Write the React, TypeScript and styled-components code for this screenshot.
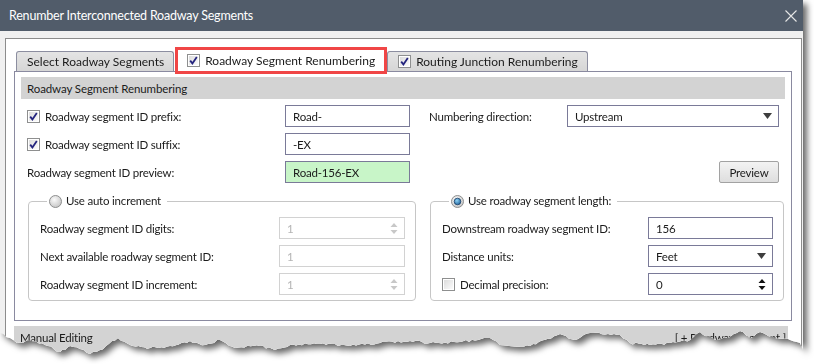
import styled, { createGlobalStyle } from "styled-components";

const GlobalStyle = createGlobalStyle`
  html, body {
    margin: 0;
    padding: 0;
    background: #fff;
  }
  body {
    font-family: Lato, "Noto Sans", sans-serif;
    font-size: 11.5px;
    letter-spacing: -0.2px;
    color: #1b1b1b;
  }
`;

// torn paper edge along the bottom of the screenshot
const edge: [number, number][] = [
  [0, 333], [10, 338], [17, 343], [30, 340], [45, 345], [60, 352], [65, 350],
  [70, 346], [80, 349], [90, 354], [100, 350], [118, 338], [130, 345],
  [150, 348], [170, 346], [190, 341], [205, 345], [220, 340], [235, 348],
  [260, 346], [275, 350], [290, 345], [320, 344], [350, 346], [380, 343],
  [410, 341], [430, 343], [460, 342], [490, 338], [500, 345], [530, 346],
  [560, 334], [575, 340], [590, 333], [620, 335], [630, 343], [650, 345],
  [670, 343], [690, 340], [700, 332], [715, 340], [730, 337], [740, 331],
  [750, 338], [760, 332], [775, 338], [790, 340], [800, 343], [803, 350],
];

const jagged = (() => {
  const pts: string[] = [];
  let seed = 7;
  const rnd = () => {
    seed = (seed * 9301 + 49297) % 233280;
    return seed / 233280 - 0.5;
  };
  for (let i = edge.length - 1; i > 0; i--) {
    const [x1, y1] = edge[i];
    const [x0, y0] = edge[i - 1];
    const steps = Math.max(1, Math.round((x1 - x0) / 3));
    for (let s = 0; s < steps; s++) {
      const t = s / steps;
      const x = x1 + (x0 - x1) * t;
      const y = y1 + (y0 - y1) * t + (s === 0 ? 0 : rnd() * 2.5);
      pts.push(`${x.toFixed(1)}px ${y.toFixed(1)}px`);
    }
  }
  pts.push(`0px ${edge[0][1]}px`);
  return `polygon(0 0, 803px 0, ${pts.join(", ")})`;
})();

const Stage = styled.div`
  width: 814px;
  height: 364px;
  overflow: hidden;
  background: #fff;
`;

const ShadowWrap = styled.div`
  width: 803px;
  filter: drop-shadow(4px 4px 3px rgba(0, 0, 0, 0.6));
`;

const Window = styled.div`
  height: 364px;
  background: #f0f0f0;
  display: flex;
  flex-direction: column;
`;

const TitleBar = styled.div`
  height: 31px;
  flex: none;
  background: #515c6a;
  color: #fff;
  display: flex;
  align-items: center;
  justify-content: space-between;
  padding: 0 6px 0 9px;
  font-size: 12.5px;
`;

const Body = styled.div`
  padding: 7px 1px 0 5px;
`;

const Panel = styled.div`
  background: #fff;
  border: 1px solid #8c8c8c;
  padding: 8px 9px 0 8px;
  height: 340px;
`;

const TabStrip = styled.div`
  display: flex;
  align-items: flex-end;
  padding-left: 2px;
  position: relative;
  z-index: 1;
`;

const Tab = styled.div<{ $active?: boolean }>`
  display: flex;
  align-items: center;
  gap: 5px;
  font-size: 12px;
  letter-spacing: 0;
  color: #1b1b1b;
  box-sizing: border-box;
  ${(p) =>
    p.$active
      ? `
    height: 27px;
    margin: 0 0 -3px 1px;
    padding: 0 9px 0 9px;
    background: #fff;
    border: 3px solid #f04646;
  `
      : `
    height: 20px;
    padding: 0 9px 0 10px;
    background: linear-gradient(#e4e4e4, #d6d6d6);
    border: 1px solid #8c8ea0;
    border-bottom: none;
    border-radius: 3px 3px 0 0;
  `}
`;

const TabBody = styled.div`
  border: 1px solid #8a8aa0;
  background: #fff;
  padding: 5px 6px 19px 6px;
`;

const SectionHeader = styled.div`
  height: 22px;
  background: #d3d3d3;
  display: flex;
  align-items: center;
  padding-left: 6px;
  letter-spacing: -0.1px;
`;

const FormGrid = styled.div`
  display: grid;
  grid-template-columns: 258px 125px 19px 138px 212px;
  grid-auto-rows: 22px;
  row-gap: 6px;
  margin-top: 6px;
  padding-left: 6px;
  align-items: center;
`;

const Label = styled.div<{ $col?: number }>`
  display: flex;
  align-items: center;
  gap: 5px;
  white-space: nowrap;
  grid-column: ${(p) => p.$col ?? "auto"};
  color: #1b1b1b;
`;

const Field = styled.div<{ $col?: number; $green?: boolean; $disabled?: boolean }>`
  grid-column: ${(p) => p.$col ?? "auto"};
  height: 22px;
  box-sizing: border-box;
  display: flex;
  align-items: center;
  justify-content: space-between;
  padding: 0 6px 0 7px;
  border: 1px solid ${(p) => (p.$disabled ? "#d2d2d2" : "#7a7a98")};
  background: ${(p) => (p.$green ? "#c8f5c8" : "#fff")};
  color: ${(p) => (p.$disabled ? "#b4b4b4" : "#1b1b1b")};
`;

const PreviewButton = styled.div`
  grid-column: 5;
  justify-self: end;
  width: 60px;
  height: 22px;
  box-sizing: border-box;
  border: 1px solid #a2a2a2;
  border-radius: 2px;
  background: linear-gradient(#f3f3f3, #dedede);
  display: flex;
  align-items: center;
  justify-content: center;
`;

const GroupRow = styled.div`
  display: flex;
  gap: 14px;
  margin: 11px 0 0 7px;
`;

const Group = styled.fieldset<{ $width: number }>`
  width: ${(p) => p.$width}px;
  box-sizing: border-box;
  margin: 0;
  min-width: 0;
  border: 1px solid #c6c6c6;
  border-radius: 4px;
  padding: 9px 10px 5px 11px;
`;

const Legend = styled.legend`
  display: flex;
  align-items: center;
  gap: 4px;
  padding: 0 6px 0 2px;
  margin-left: 7px;
  line-height: 14px;
`;

const GroupGrid = styled.div<{ $field: number }>`
  display: grid;
  grid-template-columns: 1fr ${(p) => p.$field}px;
  grid-auto-rows: 22px;
  row-gap: 6px;
  align-items: center;
`;

const ManualBand = styled.div`
  margin: 5px 4px 0 0;
  height: 40px;
  background: #d3d3d3;
  display: flex;
  justify-content: space-between;
  align-items: flex-start;
  padding: 4px 2px 0 6px;
  line-height: 16px;
`;

const CloseIcon = () => (
  <svg width="12" height="12" viewBox="0 0 12 12">
    <path d="M0.5 0.5 L11.5 11.5 M11.5 0.5 L0.5 11.5" stroke="#e6e6e6" strokeWidth="1.1" />
  </svg>
);

const CheckBox = ({ checked }: { checked?: boolean }) => (
  <svg width="13" height="13" viewBox="0 0 13 13" style={{ flex: "none" }}>
    <defs>
      <linearGradient id="cbg" x1="0" y1="0" x2="1" y2="1">
        <stop offset="0" stopColor="#dcdcdc" />
        <stop offset="1" stopColor="#fbfbfb" />
      </linearGradient>
    </defs>
    <rect x="0.5" y="0.5" width="12" height="12" fill="#fff" stroke="#8e8f8f" />
    <rect x="2" y="2" width="9" height="9" fill="url(#cbg)" />
    {checked && (
      <path d="M3.2 6.6 L5.4 9.4 L9.8 2.9" fill="none" stroke="#24247e" strokeWidth="1.8" />
    )}
  </svg>
);

const Radio = ({ checked }: { checked?: boolean }) => (
  <svg width="13" height="13" viewBox="0 0 13 13" style={{ flex: "none" }}>
    <defs>
      <radialGradient id="rbg" cx="0.4" cy="0.35" r="0.7">
        <stop offset="0" stopColor="#fafafa" />
        <stop offset="1" stopColor="#c4c4c4" />
      </radialGradient>
      <radialGradient id="rdot" cx="0.4" cy="0.35" r="0.7">
        <stop offset="0" stopColor="#8fd3f5" />
        <stop offset="1" stopColor="#1c5f9a" />
      </radialGradient>
    </defs>
    <circle cx="6.5" cy="6.5" r="6" fill="url(#rbg)" stroke="#8e8f8f" />
    {checked && <circle cx="6.5" cy="6.5" r="3.3" fill="url(#rdot)" stroke="#1b3f66" strokeWidth="0.8" />}
  </svg>
);

const DropArrow = () => (
  <svg width="9" height="6" viewBox="0 0 9 6">
    <path d="M0 0 L9 0 L4.5 6 Z" fill="#3e3e3e" />
  </svg>
);

const SpinArrows = ({ color }: { color: string }) => (
  <svg width="8" height="13" viewBox="0 0 8 13">
    <path d="M0.5 5 L4 1 L7.5 5 Z" fill={color} />
    <path d="M0.5 8 L4 12 L7.5 8 Z" fill={color} />
  </svg>
);

export default function App() {
  return (
    <Stage>
      <GlobalStyle />
      <ShadowWrap>
        <Window style={{ clipPath: jagged }}>
          <TitleBar>
            <span>Renumber Interconnected Roadway Segments</span>
            <CloseIcon />
          </TitleBar>
          <Body>
            <Panel>
              <TabStrip>
                <Tab>Select Roadway Segments</Tab>
                <Tab $active>
                  <CheckBox checked />
                  Roadway Segment Renumbering
                </Tab>
                <Tab>
                  <CheckBox checked />
                  Routing Junction Renumbering
                </Tab>
              </TabStrip>
              <TabBody>
                <SectionHeader>Roadway Segment Renumbering</SectionHeader>
                <FormGrid>
                  <Label $col={1}>
                    <CheckBox checked />
                    Roadway segment ID prefix:
                  </Label>
                  <Field $col={2}>Road-</Field>
                  <Label $col={4}>Numbering direction:</Label>
                  <Field $col={5}>
                    Upstream
                    <DropArrow />
                  </Field>

                  <Label $col={1}>
                    <CheckBox checked />
                    Roadway segment ID suffix:
                  </Label>
                  <Field $col={2}>-EX</Field>

                  <Label $col={1}>Roadway segment ID preview:</Label>
                  <Field $col={2} $green>
                    Road-156-EX
                  </Field>
                  <PreviewButton>Preview</PreviewButton>
                </FormGrid>

                <GroupRow>
                  <Group $width={388}>
                    <Legend>
                      <Radio />
                      Use auto increment
                    </Legend>
                    <GroupGrid $field={126}>
                      <Label>Roadway segment ID digits:</Label>
                      <Field $disabled>
                        1
                        <SpinArrows color="#c8c8c8" />
                      </Field>
                      <Label>Next available roadway segment ID:</Label>
                      <Field $disabled>1</Field>
                      <Label>Roadway segment ID increment:</Label>
                      <Field $disabled>
                        1
                        <SpinArrows color="#c8c8c8" />
                      </Field>
                    </GroupGrid>
                  </Group>
                  <Group $width={354}>
                    <Legend>
                      <Radio checked />
                      Use roadway segment length:
                    </Legend>
                    <GroupGrid $field={125}>
                      <Label>Downstream roadway segment ID:</Label>
                      <Field>156</Field>
                      <Label>Distance units:</Label>
                      <Field>
                        Feet
                        <DropArrow />
                      </Field>
                      <Label>
                        <CheckBox />
                        Decimal precision:
                      </Label>
                      <Field>
                        0
                        <SpinArrows color="#111" />
                      </Field>
                    </GroupGrid>
                  </Group>
                </GroupRow>
              </TabBody>
              <ManualBand>
                <span>Manual Editing</span>
                <span>[ + Roadway Segment ]</span>
              </ManualBand>
            </Panel>
          </Body>
        </Window>
      </ShadowWrap>
    </Stage>
  );
}
